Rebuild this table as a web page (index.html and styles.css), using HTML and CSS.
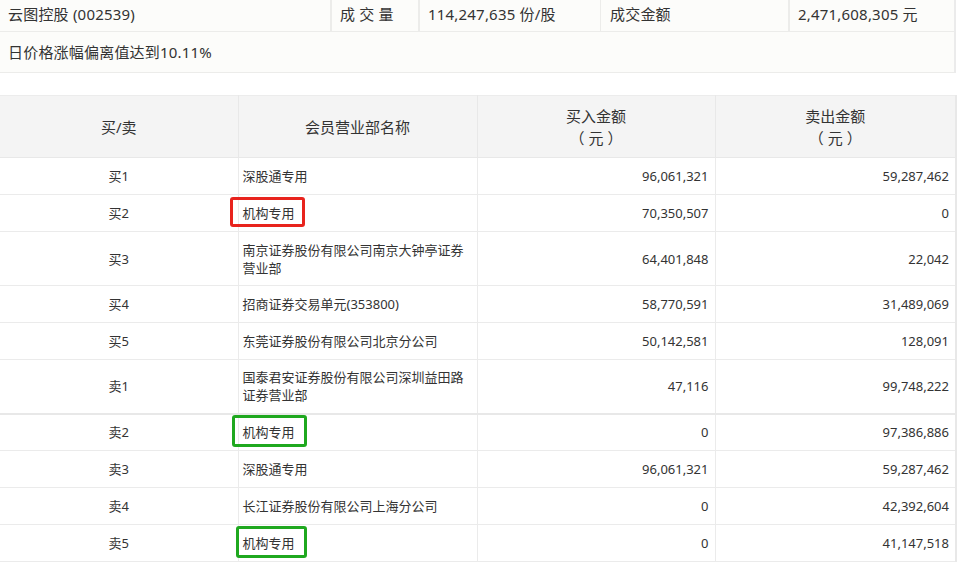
FILE: index.html
```html
<!DOCTYPE html>
<html lang="zh-CN">
<head>
<meta charset="utf-8">
<title>龙虎榜</title>
<link rel="stylesheet" href="styles.css">
</head>
<body>
<div class="page">
  <div class="summary">
    <div class="summary-row">
      <div class="s-cell s-name">云图控股 (002539)</div>
      <div class="s-cell s-lbl1">成 交 量</div>
      <div class="s-cell s-val1">114,247,635 份/股</div>
      <div class="s-cell s-lbl2">成交金额</div>
      <div class="s-cell s-val2">2,471,608,305 元</div>
    </div>
    <div class="summary-row summary-reason">
      <div class="s-cell s-full">日价格涨幅偏离值达到10.11%</div>
    </div>
  </div>

  <table class="lhb">
    <colgroup>
      <col class="c1"><col class="c2"><col class="c3"><col class="c4">
    </colgroup>
    <thead>
      <tr>
        <th>买/卖</th>
        <th>会员营业部名称</th>
        <th>买入金额<br><span class="unit">（元）</span></th>
        <th>卖出金额<br><span class="unit">（元）</span></th>
      </tr>
    </thead>
    <tbody>
      <tr><td class="side">买1</td><td class="name">深股通专用</td><td class="num">96,061,321</td><td class="num">59,287,462</td></tr>
      <tr><td class="side">买2</td><td class="name">机构专用</td><td class="num">70,350,507</td><td class="num">0</td></tr>
      <tr class="tall"><td class="side">买3</td><td class="name">南京证券股份有限公司南京大钟亭证券营业部</td><td class="num">64,401,848</td><td class="num">22,042</td></tr>
      <tr><td class="side">买4</td><td class="name">招商证券交易单元(353800)</td><td class="num">58,770,591</td><td class="num">31,489,069</td></tr>
      <tr><td class="side">买5</td><td class="name">东莞证券股份有限公司北京分公司</td><td class="num">50,142,581</td><td class="num">128,091</td></tr>
      <tr class="tall split"><td class="side">卖1</td><td class="name">国泰君安证券股份有限公司深圳益田路证券营业部</td><td class="num">47,116</td><td class="num">99,748,222</td></tr>
      <tr><td class="side">卖2</td><td class="name">机构专用</td><td class="num">0</td><td class="num">97,386,886</td></tr>
      <tr><td class="side">卖3</td><td class="name">深股通专用</td><td class="num">96,061,321</td><td class="num">59,287,462</td></tr>
      <tr><td class="side">卖4</td><td class="name">长江证券股份有限公司上海分公司</td><td class="num">0</td><td class="num">42,392,604</td></tr>
      <tr><td class="side">卖5</td><td class="name">机构专用</td><td class="num">0</td><td class="num">41,147,518</td></tr>
    </tbody>
  </table>

  <div class="mark mark-red mark-b2"></div>
  <div class="mark mark-green mark-s2"></div>
  <div class="mark mark-green mark-s5"></div>
</div>
</body>
</html>
```

FILE: styles.css
```css
* { box-sizing: border-box; }

html, body {
  margin: 0;
  padding: 0;
  background: #ffffff;
}

body {
  font-family: "Noto Sans", "Noto Sans CJK SC", sans-serif;
  color: #333333;
}

.page {
  position: relative;
  width: 972px;
  height: 575px;
}

/* ---------- summary block ---------- */
.summary {
  width: 956px;
  background: #fcfcfa;
  border-right: 2px solid #ebebeb;
  font-size: 15px;
}

.summary-row {
  display: flex;
  border-bottom: 1px solid #ececea;
}

.s-cell {
  height: 31px;
  line-height: 28px;
  padding-left: 8px;
  white-space: nowrap;
  letter-spacing: 0.2px;
}

.s-name { width: 332px; border-right: 2px solid #ececea; }
.s-lbl1 { width: 88px;  border-right: 2px solid #ececea; }
.s-val1 { width: 181px; border-right: 1px solid #ececea; }
.s-lbl2 { width: 189px; border-right: 2px solid #ececea; padding-left: 9px; }
.s-val2 { flex: 1; }

.summary-reason .s-cell {
  height: 40px;
  line-height: 40px;
}

.s-full { flex: 1; }

/* ---------- main table ---------- */
.lhb {
  margin-top: 22px;
  width: 956px;
  border-collapse: collapse;
  border-spacing: 0;
  table-layout: fixed;
  font-size: 13px;
  border-top: 1px solid #ececec;
  border-right: 2px solid #e8e8e8;
}

.lhb col.c1 { width: 238px; }
.lhb col.c2 { width: 239px; }
.lhb col.c3 { width: 238px; }
.lhb col.c4 { width: 241px; }

.lhb th {
  background: #f4f4f4;
  font-weight: normal;
  font-size: 15px;
  line-height: 22px;
  height: 62px;
  padding: 0 6px;
  text-align: center;
  vertical-align: middle;
  border-right: 1px solid #e8e8e8;
  border-bottom: 1px solid #e8e8e8;
}

.lhb th .unit {
  letter-spacing: 4px;
  padding-left: 4px;
}

.lhb td {
  height: 37px;
  line-height: 18px;
  padding: 0 6px;
  vertical-align: middle;
  border-right: 1px solid #ebebeb;
  border-bottom: 1px solid #ebebeb;
}

.lhb tr.tall td { height: 54px; }

.lhb tr.split td { border-bottom: 2px solid #e8e8e8; }

.lhb td.side { text-align: center; }
.lhb td.name { text-align: left; padding-left: 4px; }
.lhb td.num  { text-align: right; }

/* ---------- annotation boxes ---------- */
.mark {
  position: absolute;
  border: 3px solid;
  border-radius: 3px;
  pointer-events: none;
}

.mark-red   { border-color: #e8231d; }
.mark-green { border-color: #1fa81f; }

.mark-b2 { left: 230px; top: 197px; width: 75px; height: 30px; }
.mark-s2 { left: 232px; top: 415px; width: 75px; height: 32px; }
.mark-s5 { left: 236px; top: 526px; width: 71px; height: 32px; }
```
